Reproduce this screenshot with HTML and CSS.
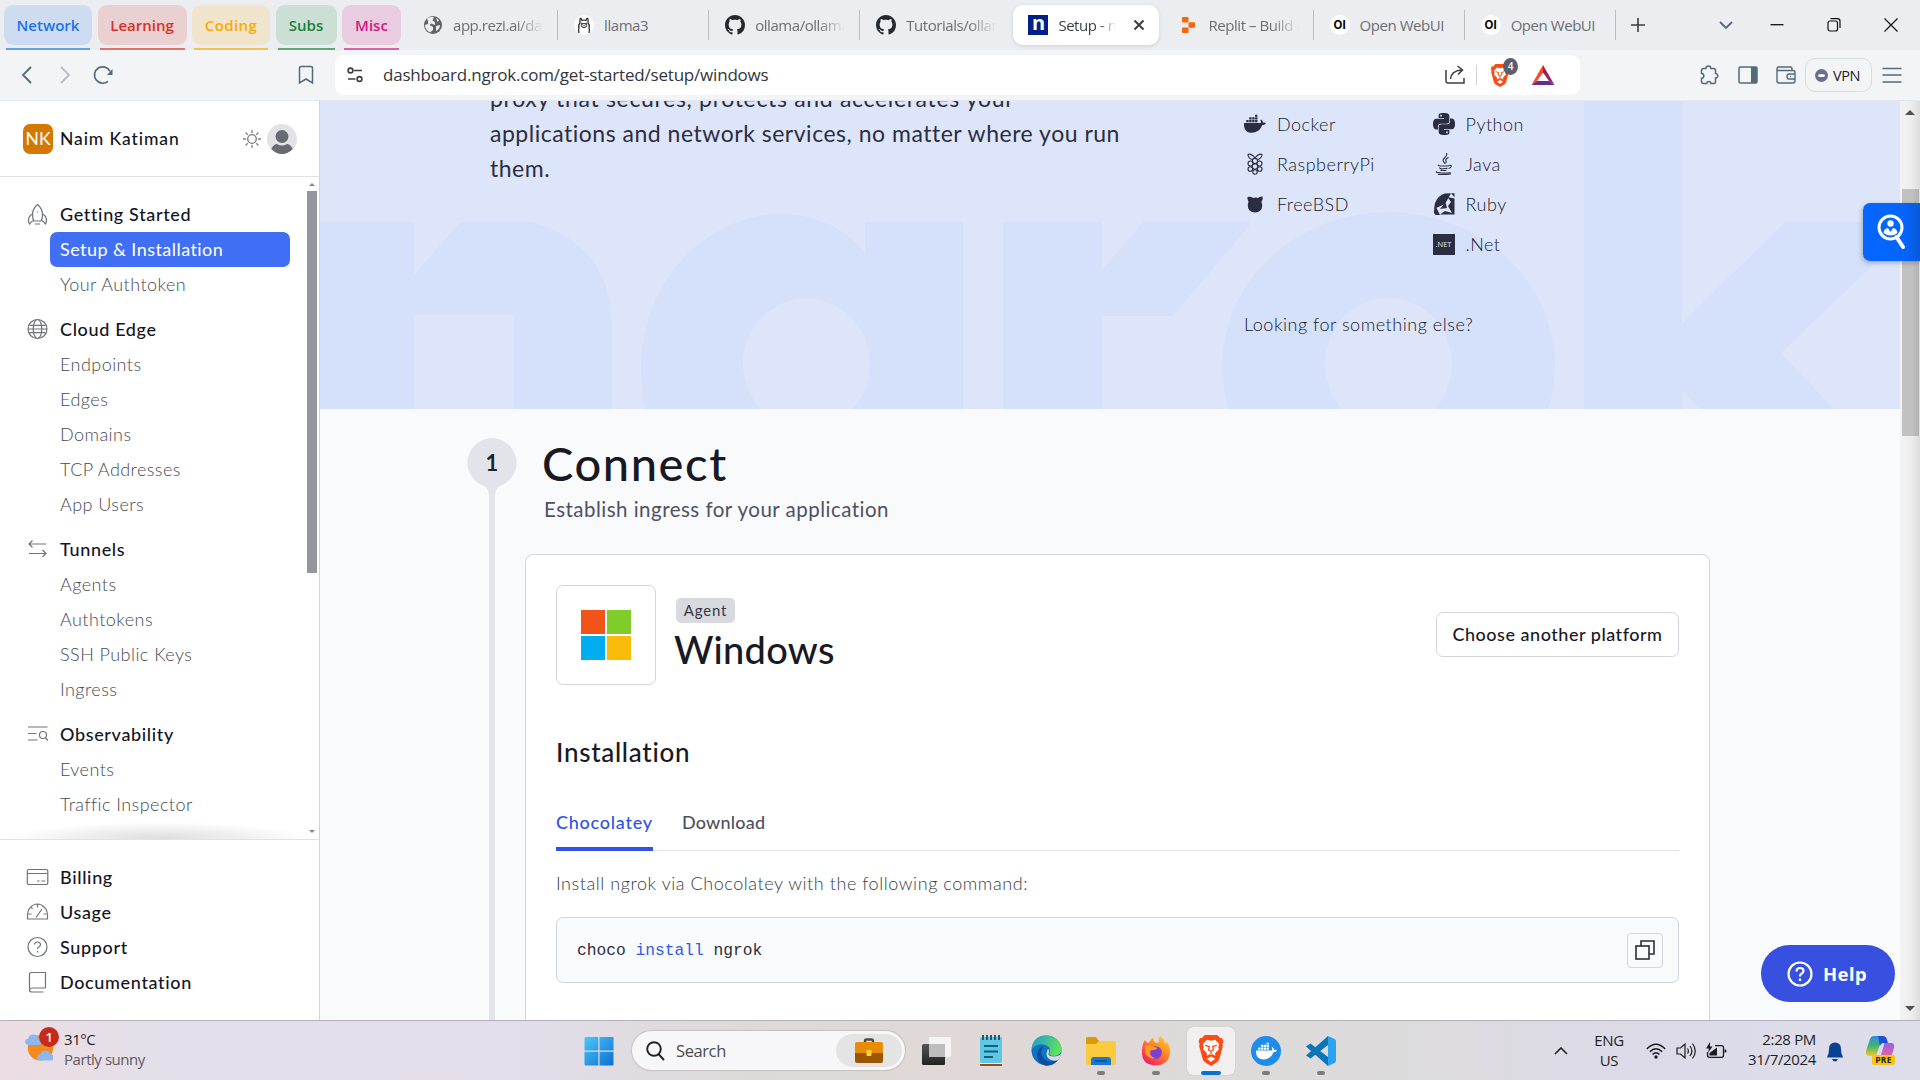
FILE: index.html
```html
<!DOCTYPE html>
<html lang="en">
<head>
<meta charset="utf-8">
<title>Setup - ngrok</title>
<link rel="stylesheet" href="styles.css">
</head>
<body>
<svg class="defs" width="0" height="0">
  <defs>
    <symbol id="github" viewBox="0 0 16 16"><path d="M8 0C3.58 0 0 3.58 0 8c0 3.54 2.29 6.53 5.47 7.59.4.07.55-.17.55-.38 0-.19-.01-.82-.01-1.49-2.01.37-2.53-.49-2.69-.94-.09-.23-.48-.94-.82-1.13-.28-.15-.68-.52-.01-.53.63-.01 1.08.58 1.23.82.72 1.21 1.87.87 2.33.66.07-.52.28-.87.51-1.07-1.78-.2-3.64-.89-3.64-3.95 0-.87.31-1.59.82-2.15-.08-.2-.36-1.02.08-2.12 0 0 .67-.21 2.2.82.64-.18 1.32-.27 2-.27.68 0 1.36.09 2 .27 1.53-1.04 2.2-.82 2.2-.82.44 1.1.16 1.92.08 2.12.51.56.82 1.27.82 2.15 0 3.07-1.87 3.75-3.65 3.95.29.25.54.73.54 1.48 0 1.07-.01 1.93-.01 2.2 0 .21.15.46.55.38A8.013 8.013 0 0016 8c0-4.42-3.58-8-8-8z"/></symbol>
    <symbol id="lion" viewBox="0 0 24 30"><path fill="#ff4a12" d="M6 0h12l3 3.2 1.7-.3L24 6.400l-1 2.600.5 1.600L20 23.500q-.6 2-2.500 3.200L12 30l-5.500-3.300Q4.600 25.500 4 23.500L.5 10.600 1 9 0 6.400l1.300-3.500 1.700.3z"/><path fill="#fff" d="M12 5.500l4-1 3.800 4.200-.8 3.300.7 1.600-3.900 4.200.5 2.400-3-1.500-1.300.6-1.300-.6-3 1.500.5-2.400-3.900-4.200.7-1.600-.8-3.300L8 4.500zM12 20.800l4 2.200-4 3.200-4-3.200z"/><path fill="none" stroke="#ff4a12" stroke-width="1.300" d="M6.300 10l4 1.200-.6 3.300 2.300 1.300 2.300-1.300-.6-3.300 4-1.200M12 15.800v3"/></symbol>
    <symbol id="whale" viewBox="0 0 24 20"><path d="M0 9h18.300c.4-.9.200-2.200-.5-3l.7-.8c1.500.9 2.200 2 2.100 3.300 1.200-.4 2.500-.2 3.400.4-.8 1.600-2.300 2.300-4.100 2.200C18 16.700 13.700 19.500 8.300 19.500 2.500 19.500-.4 15.500 0 9zM2.500 5.700h2.600v2.500H2.500zM5.700 5.700h2.600v2.500H5.700zM8.900 5.700h2.600v2.500H8.900zM12.100 5.700h2.600v2.500h-2.600zM5.700 2.600h2.600v2.500H5.700zM8.900 2.600h2.600v2.500H8.900zM12.100 2.600h2.600v2.500h-2.600zM12.100 0h2.600v2h-2.600z"/></symbol>
  </defs>
</svg>

<header class="tabstrip">
  <div class="groups">
    <div class="group g-network"><span>Network</span></div>
    <div class="group g-learning"><span>Learning</span></div>
    <div class="group g-coding"><span>Coding</span></div>
    <div class="group g-subs"><span>Subs</span></div>
    <div class="group g-misc"><span>Misc</span></div>
  </div>
  <div class="tabs">
    <div class="tab"><svg width="20" height="20" viewBox="0 0 20 20"><circle cx="10" cy="10" r="9" fill="#5f6368"/><path fill="#eceef1" d="M4 3.500Q8 1 11 2L9.500 5.500 12 7v3L8 8.500 6.500 10 10 12v3l-3 2.500Q2 15 2 10l3-1V6zM13 3l3 2-1.500 2zM13 11l4-1q0 4-4 6z"/></svg><span class="fade">app.rezi.ai/dashboard</span></div>
    <div class="tab"><svg width="20" height="20" viewBox="0 0 20 20"><circle cx="10" cy="10" r="10" fill="#fff"/><path fill="none" stroke="#222" stroke-width="1.200" d="M5 18q-1-3 0-5-1-3 1-5V4q1-2 2 1.500 2-1 4 0Q13 2 14 4v4q2 2 1 5 1 2 0 5"/><ellipse cx="10" cy="10.500" rx="2.700" ry="2" fill="none" stroke="#222"/><path stroke="#222" stroke-width="1.300" d="M7.200 8.500h1M11.800 8.500h1M10 10v1"/></svg><span>llama3</span></div>
    <div class="tab"><svg width="20" height="20" fill="#24292f"><use href="#github"/></svg><span class="fade">ollama/ollama: Get up</span></div>
    <div class="tab no-sep"><svg width="20" height="20" fill="#24292f"><use href="#github"/></svg><span class="fade">Tutorials/ollama at</span></div>
    <div class="tab active"><i class="n-icon">n</i><span class="fade">Setup - ngrok</span><svg class="close" width="12" height="12" viewBox="0 0 12 12"><path stroke="#3b3e43" stroke-width="2" d="M1.500 1.500l9 9M10.500 1.500l-9 9"/></svg></div>
    <div class="tab"><svg width="20" height="20" viewBox="0 0 20 20" fill="#f86606"><rect x="4" y="2" width="6.500" height="5.500" rx="1"/><rect x="10.500" y="7.200" width="6.500" height="5.600" rx="1"/><rect x="4" y="12.600" width="6.500" height="5.500" rx="1"/></svg><span class="fade">Replit – Build apps</span></div>
    <div class="tab"><i class="oi">OI</i><span>Open WebUI</span></div>
    <div class="tab"><i class="oi">OI</i><span>Open WebUI</span></div>
  </div>
  <svg class="newtab" width="16" height="16" viewBox="0 0 16 16"><path stroke="#3b3e43" stroke-width="1.600" d="M8 1v14M1 8h14"/></svg>
  <div class="winctl">
    <svg width="16" height="16" viewBox="0 0 16 16" fill="none" stroke="#546a78" stroke-width="1.800"><path d="M2 5l6 6 6-6"/></svg>
    <svg width="16" height="16" viewBox="0 0 16 16" fill="none" stroke="#111" stroke-width="1.300"><path d="M1.500 7.700h13"/></svg>
    <svg width="16" height="16" viewBox="0 0 16 16" fill="none" stroke="#111" stroke-width="1.200"><rect x="2" y="4" width="9.500" height="10" rx="2"/><path d="M4.500 1.700h7q2.500 0 2.500 2.500V11"/></svg>
    <svg width="16" height="16" viewBox="0 0 16 16" fill="none" stroke="#111" stroke-width="1.200"><path d="M1.500 1.500l13 13M14.500 1.500l-13 13"/></svg>
  </div>
</header>

<div class="toolbar">
  <div class="navbtns">
    <svg width="20" height="20" viewBox="0 0 20 20" fill="none" stroke="#546a78" stroke-width="1.800"><path d="M14 2L6 10l8 8"/></svg>
    <svg width="20" height="20" viewBox="0 0 20 20" fill="none" stroke="#b5bec5" stroke-width="1.800"><path d="M6 2l8 8-8 8"/></svg>
    <svg width="20" height="20" viewBox="0 0 20 20" fill="none" stroke="#546a78" stroke-width="1.700"><path d="M15 16.300A8.200 8.200 0 1 1 17 6.300"/><path fill="#546a78" stroke="none" d="M19.500 4v6h-5.500z"/></svg>
  </div>
  <svg class="bookmark" width="20" height="20" viewBox="0 0 20 20" fill="none" stroke="#546a78" stroke-width="1.500"><path d="M3.500 18V3q0-1.500 1.500-1.500h10q1.500 0 1.500 1.500v15L10 14z"/></svg>
  <div class="omnibox">
    <svg width="20" height="20" viewBox="0 0 20 20" fill="none" stroke="#3b3e43" stroke-width="1.600"><circle cx="5.500" cy="5.500" r="2.400"/><path d="M9 5.500h8M3 14h7.500"/><circle cx="14.500" cy="14" r="2.400"/></svg>
    <span class="url">dashboard.ngrok.com/get-started/setup/windows</span>
    <svg class="share" width="22" height="20" viewBox="0 0 22 20" fill="none" stroke="#3b3e43" stroke-width="1.500"><path d="M2 5v11q0 2 2 2h16v-5M6.500 14q.5-8 11-9M13.500 1l5 4-4.500 4.500"/></svg>
    <i class="vsep"></i>
    <span class="shield"><svg width="20" height="23"><use href="#lion"/></svg><b>4</b></span>
    <svg class="bat" width="24" height="20" viewBox="0 0 24 20"><path fill="#ff4724" d="M12 0v7.500L5.500 16.500.5 20z"/><path fill="#9e1f63" d="M12 0l11.500 20-5.500-4L12 7.500z"/><path fill="#662d91" d="M.5 20l5.500-4h12l5.500 4z"/></svg>
  </div>
  <div class="exts">
    <svg width="20" height="20" viewBox="0 0 20 20" fill="none" stroke="#546a78" stroke-width="1.500"><path d="M1.500 5.500q0-2 2-2h2.500a2.400 2.400 0 1 1 4.800 0h2.700q2 0 2 2v3a2.300 2.300 0 1 1 0 4.600V17q0 1.500-1.500 1.500h-3.200a2 2 0 0 0-4 0H3.500q-2 0-2-2v-3.300a2.300 2.300 0 0 0 0-4.600z"/></svg>
    <svg width="20" height="20" viewBox="0 0 20 20"><rect x="1" y="2" width="18" height="16" rx="1.500" fill="none" stroke="#546a78" stroke-width="1.500"/><path fill="#546a78" d="M13 2h6v16h-6z"/></svg>
    <svg width="20" height="20" viewBox="0 0 20 20" fill="none" stroke="#546a78" stroke-width="1.400"><path d="M16 5.500V3.500Q16 2 14.500 2H3Q1 2 1 4v12q0 2 2 2h14q2 0 2-2V7.500q0-2-2-2H1.500M19 9h-6q-2 0-2 2.500t2 2.500h6M14 11.500h1"/></svg>
    <div class="vpn"><i></i>VPN</div>
    <svg width="20" height="20" viewBox="0 0 20 20" stroke="#546a78" stroke-width="1.500"><path d="M.5 3.500h19M.5 10h19M.5 17h19"/></svg>
  </div>
</div>

<div class="page">
  <aside class="sidebar">
    <div class="account">
      <span class="badge">NK</span>
      <span class="name">Naim Katiman</span>
      <svg width="20" height="20" viewBox="0 0 20 20" fill="none" stroke="#787a84" stroke-width="1.300" stroke-linecap="round"><circle cx="10" cy="10" r="4.300"/><path d="M10 1.500v2M10 16.500v2M1.500 10h2M16.500 10h2M4 4l1.400 1.400M14.600 14.600L16 16M4 16l1.400-1.400M14.600 5.400L16 4"/></svg>
      <svg class="avatar" width="30" height="30" viewBox="0 0 30 30"><circle cx="15" cy="15" r="15" fill="#e3e3e6"/><circle cx="15" cy="12.500" r="6.500" fill="#686a73"/><path fill="#686a73" d="M4.200 25Q7 20 10 20q5 3 10 0 3 0 5.800 5-5 5-10.800 5t-10.800-5z"/></svg>
    </div>
    <div class="navwrap">
      <nav class="nav">
        <div class="section">
          <div class="head"><svg viewBox="0 0 22 22"><path d="M11 1.500q-5 4-5 10.500 0 4 1.500 6h7q1.500-2 1.500-6 0-6.500-5-10.500zM6 11q-4 2-4 6.500 0 2.500 1.200 3.500 1-2.500 3.800-3.500M16 11q4 2 4 6.500 0 2.500-1.200 3.500-1-2.500-3.800-3.500M8.500 21h5M11 8.500v1"/></svg>Getting Started</div>
          <a class="current">Setup &amp; Installation</a><a>Your Authtoken</a>
        </div>
        <div class="section">
          <div class="head"><svg viewBox="0 0 22 22"><circle cx="11" cy="11" r="9.500"/><ellipse cx="11" cy="11" rx="4.300" ry="9.500"/><path d="M3 7.300h16M3 14.700h16M1.500 11h19"/></svg>Cloud Edge</div>
          <a>Endpoints</a><a>Edges</a><a>Domains</a><a>TCP Addresses</a><a>App Users</a>
        </div>
        <div class="section">
          <div class="head"><svg viewBox="0 0 22 22"><path d="M19.500 6H3M6 2.500L2.500 6 6 9.500M2.500 15.500H19M16 12l3.500 3.500L16 19"/></svg>Tunnels</div>
          <a>Agents</a><a>Authtokens</a><a>SSH Public Keys</a><a>Ingress</a>
        </div>
        <div class="section">
          <div class="head"><svg viewBox="0 0 22 22"><path d="M1.500 4H21M1.500 10.500H10M1.500 17H11M19 15l2.500 2.500"/><circle cx="16.500" cy="12" r="3.500"/></svg>Observability</div>
          <a>Events</a><a>Traffic Inspector</a>
        </div>
      </nav>
      <div class="navscroll"><i class="up"></i><i class="thumb"></i><i class="down"></i></div>
    </div>
    <div class="footnav">
      <div class="head"><svg viewBox="0 0 22 22"><rect x=".8" y="3.500" width="20.500" height="15" rx="1.500"/><path d="M1 7.500h20M10.500 15h2.500M15 15h3.500"/></svg>Billing</div>
      <div class="head"><svg viewBox="0 0 22 22"><path d="M1 18q-.5-9 3-11.500Q7 3 11 3t7 3.500Q21.500 9 21 18zM11 3v3.500M2 13h3M17 13h3M9.500 16.500L15.500 8M5 6.500l1 1.500"/></svg>Usage</div>
      <div class="head"><svg viewBox="0 0 22 22"><circle cx="11" cy="11" r="9.500"/><path d="M8 8.500Q8.200 6 11 6t3 2.500Q14 10 12.500 10.700 11 11.300 11 13M11 15v1.500"/></svg>Support</div>
      <div class="head"><svg viewBox="0 0 22 22"><path d="M19 17V1.500H5Q3 1.500 3 3.500V19M19 17H5.500Q3 17 3 19t2.500 2H17"/></svg>Documentation</div>
    </div>
  </aside>

  <main class="main">
    <section class="hero">
      <svg class="wordmark" width="1580" height="308" viewBox="0 0 1580 308" fill="#d5e0fb"><path d="M0 121.500H94V174L140 121H212C266 136 292 174 292 224V308H194V214H94V308H0z"/><path fill-rule="evenodd" d="M325 308Q321 290 321 268C321 180 386 113 461 113Q512 113 545 151V121H643V308H532Q550 290 550 263A63.500 65.500 0 1 0 423 263Q424 290 441 308z"/><path d="M683 121H782V169L823 121H930V124L853 215H782V308H683z"/><path fill-rule="evenodd" d="M1068.500 111A166.500 154 0 0 0 1068.500 419 166.500 154 0 0 0 1068.500 111zM1068.500 197A63.500 66 0 0 1 1068.500 329 63.500 66 0 0 1 1068.500 197z"/><path d="M1264 0H1362V222L1465 121H1580V138L1461 252 1514 308H1379L1362 289V308H1264z"/></svg>
      <p class="lead"><span>proxy that secures, protects and accelerates your</span><br>applications and network services, no matter where you run<br>them.</p>
      <div class="links">
        <ul>
          <li><svg viewBox="0 0 22 22"><use href="#whale" x="0" y="1" width="22" height="20"/></svg>Docker</li>
          <li><svg viewBox="0 0 22 22" fill="none" stroke="#2b2d42" stroke-width="1.100"><path d="M11 5Q7 0 4 1.500 4 5 8 6.500M11 5q4-5 7-3.500 0 3.500-4 5"/><circle cx="11" cy="8" r="2.600"/><circle cx="6.500" cy="10.500" r="2.500"/><circle cx="15.500" cy="10.500" r="2.500"/><circle cx="11" cy="13.500" r="2.700"/><circle cx="6.300" cy="16" r="2.300"/><circle cx="15.700" cy="16" r="2.300"/><circle cx="11" cy="19" r="2.200"/></svg>RaspberryPi</li>
          <li><svg viewBox="0 0 22 22"><path d="M3.500 4Q7 3 9 5q3-1 5 0 2-2 4.500-1.500Q19.500 6 17.500 9q1.500 3 .2 6.500-2 4-6.700 4t-6.700-4Q3 12 4.500 9 3 6 3.500 4z"/></svg>FreeBSD</li>
        </ul>
        <ul>
          <li><svg viewBox="0 0 24 24"><path d="M14.250.18l.9.2.73.26.59.3.45.32.34.34.25.34.16.33.1.3.04.26.02.2-.01.13V8.500l-.05.63-.13.55-.21.46-.26.38-.3.31-.33.25-.35.19-.35.14-.33.1-.3.07-.26.04-.21.02H8.770l-.69.05-.59.14-.5.22-.41.27-.33.32-.27.35-.2.36-.15.37-.1.35-.07.32-.04.27-.02.21v3.060H3.170l-.21-.03-.28-.07-.32-.12-.35-.18-.36-.26-.36-.36-.35-.46-.32-.59-.28-.73-.21-.88-.14-1.050-.05-1.230.06-1.220.16-1.040.24-.87.32-.71.36-.57.4-.44.42-.33.42-.24.4-.16.36-.1.32-.05.24-.01h.16l.06.01h8.160v-.83H6.180l-.01-2.750-.02-.37.05-.34.11-.31.17-.28.25-.26.31-.23.38-.2.44-.18.51-.15.58-.12.64-.1.71-.06.77-.04.84-.02 1.270.05zm-6.300 1.980l-.23.33-.08.41.08.41.23.34.33.22.41.09.41-.09.33-.22.23-.34.08-.41-.08-.41-.23-.33-.33-.22-.41-.09-.41.09zm13.090 3.950l.28.06.32.12.35.18.36.27.36.35.35.47.32.59.28.73.21.88.14 1.040.05 1.230-.06 1.230-.16 1.040-.24.86-.32.71-.36.57-.4.45-.42.33-.42.24-.4.16-.36.09-.32.05-.24.02-.16-.01h-8.220v.82h5.840l.01 2.760.02.36-.05.34-.11.31-.17.29-.25.25-.31.24-.38.2-.44.17-.51.15-.58.13-.64.09-.71.07-.77.04-.84.01-1.270-.04-1.070-.14-.9-.2-.73-.25-.59-.3-.45-.33-.34-.34-.25-.34-.16-.33-.1-.3-.04-.25-.02-.2.01-.13v-5.340l.05-.64.13-.54.21-.46.26-.38.3-.32.33-.24.35-.2.35-.14.33-.1.3-.06.26-.04.21-.02.13-.01h5.840l.69-.05.59-.14.5-.21.41-.28.33-.32.27-.35.2-.36.15-.36.1-.35.07-.32.04-.28.02-.21V6.070h2.090l.14.01zm-6.470 14.250l-.23.33-.08.41.08.41.23.33.33.23.41.08.41-.08.33-.23.23-.33.08-.41-.08-.41-.23-.33-.33-.23-.41-.08-.41.08z"/></svg>Python</li>
          <li><svg viewBox="0 0 22 22" fill="none" stroke="#2b2d42" stroke-width="1.100"><path d="M13.500 0q1 2.500-2 5t.5 5.500M15.500 4.500q-3.500 1.500-2.500 3.500.5 1-.5 2.500M5.500 12q-1.500 1 5 1t6-1M16.500 12.500q2.500-.5 1.500 1.500-.7 1-2.500 1.500M6.500 14.500q0 1.500 4 1.200 3 0 4-.7M7.500 17q1 1 6 .2M4 18.500q-2.500 1 4.500 1.500 7 .3 9-.5M5 21.500q8 .5 13-.8"/></svg>Java</li>
          <li><svg viewBox="0 0 22 22"><path d="M2 10Q5 2 12 .5L18 .3 12 11 1 16zM14.500 4L21.500 5.500V21.500H7L12 18l7 2-4-7 3-4zM18 .3h3.500v4zM1 17l2-3 4 8Q0 23 1 17zM12.500 9.500L14 15l-7 1z"/></svg>Ruby</li>
          <li><i class="net">.NET</i>.Net</li>
        </ul>
        <p>Looking for something else?</p>
      </div>
    </section>
    <section class="step">
      <div class="rail"><svg width="50" height="60" viewBox="0 0 50 60" fill="#e3e4ea"><circle cx="25" cy="24.700" r="24.600"/><path d="M15 46q7 3 7.200 14h5.600q.2-11 7.200-14z"/></svg><b>1</b><i></i></div>
      <div class="body">
        <h1>Connect</h1>
        <p class="sub">Establish ingress for your application</p>
        <div class="card">
          <div class="platform">
            <div class="logo"><i></i><i></i><i></i><i></i></div>
            <div class="title"><span class="tag">Agent</span><h2>Windows</h2></div>
            <button>Choose another platform</button>
          </div>
          <h3>Installation</h3>
          <div class="cardtabs"><span class="on">Chocolatey</span><span>Download</span></div>
          <p class="hint">Install ngrok via Chocolatey with the following command:</p>
          <div class="code"><code>choco <em>install</em> ngrok</code><span class="copy"><svg width="20" height="20" viewBox="0 0 20 20" fill="none" stroke="#2b2d3a" stroke-width="1.600"><rect x="1" y="6" width="13" height="13"/><path d="M6 6V1h13v13h-5"/></svg></span></div>
        </div>
      </div>
    </section>
    <div class="help"><svg width="26" height="26" viewBox="0 0 26 26" fill="none" stroke="#fff" stroke-width="2.200"><circle cx="13" cy="13" r="11.500"/><path d="M9.500 10.500q0-3.500 3.500-3.500t3.500 3q0 1.500-2 2.700-1.500 1-1.500 2.800M13 17.500V20"/></svg>Help</div>
  </main>
  <div class="pagescroll"><i class="up"></i><i class="thumb"></i><i class="down"></i></div>
  <div class="lookup"><svg width="30" height="36" viewBox="0 0 30 36" fill="none" stroke="#fff"><circle cx="13.500" cy="13.500" r="11.500" stroke-width="3"/><path stroke-width="4" stroke-linecap="round" d="M19.500 23L26 33"/><circle cx="13.500" cy="9.500" r="3.200" fill="#fff" stroke="none"/><path fill="#fff" stroke="none" d="M6.500 19q.5-4.500 4.500-5l2.500 4 2.500-4q4 .5 4.500 5-6.500 5-14 0z"/></svg></div>
</div>

<footer class="taskbar">
  <div class="weather">
    <div class="wicon"><svg width="34" height="36" viewBox="0 0 34 36"><circle cx="17" cy="20" r="14" fill="#f28a1e"/><path fill="#8db8ef" d="M3 17q-3-1-3-3.500 0-3 3.500-3.500Q4.500 5.500 9 5.500t6 4.500q3 .5 3 3.500T15 17zM16 34q-3-.5-3-3.500t4-3.500q1-4 5-4t5.500 3.500Q31 27 31 30.500T28 34z"/></svg><b>1</b></div>
    <div><p>31°C</p><p class="dim">Partly sunny</p></div>
  </div>
  <div class="apps">
    <svg width="30" height="30" viewBox="0 0 30 30"><defs><linearGradient id="win" x1="0" y1="0" x2="1" y2="1"><stop offset="0" stop-color="#4cc8fb"/><stop offset="1" stop-color="#0a6fd2"/></linearGradient></defs><path fill="url(#win)" d="M.5 2q0-1 1-1H14.300v13.500H.5zM15.500 1h13q1 0 1 1v12.500h-14zM.5 15.700h13.800v13.800H1.500q-1 0-1-1zM15.500 15.700h14v12.800q0 1-1 1h-13z"/></svg>
    <div class="search"><svg width="20" height="20" viewBox="0 0 20 20" fill="none" stroke="#222" stroke-width="1.900"><circle cx="9" cy="8" r="6.800"/><path d="M13.500 13l5 5.500" stroke-linecap="round"/></svg><span>Search</span><div class="case"><svg width="30" height="26" viewBox="0 0 30 26"><path fill="none" stroke="#4a4a4a" stroke-width="2.400" d="M11 5V3q0-1.500 1.500-1.500h5Q19 1.500 19 3v2"/><path fill="#e98c05" d="M1 6q0-2 2-2h24q2 0 2 2v11H1z"/><path fill="#9c5600" d="M1 15h28v8q0 2-2 2H3q-2 0-2-2z"/><rect x="12.500" y="12" width="5" height="6" rx="1" fill="#ffd13b"/></svg></div></div>
    <span class="app"><svg width="30" height="30" viewBox="0 0 30 30"><defs><linearGradient id="tv" x2="0" y2="1"><stop stop-color="#555"/><stop offset="1" stop-color="#222"/></linearGradient></defs><rect x="1" y="8" width="23" height="21" rx="1.500" fill="url(#tv)"/><rect x="8" y="1" width="22" height="20" rx="1.500" fill="#f6f6f6" fill-opacity=".95"/><path fill="#bdbdbd" d="M8 8h16v13H9.500Q8 21 8 19.500z"/></svg></span>
    <span class="app"><svg width="24" height="32" viewBox="0 0 24 32"><path fill="#9c4a12" d="M1 27h22v4H2q-1 0-1-1z"/><path fill="#f4f4f4" d="M1 26h22v3H1z"/><rect x="1" y="2" width="22" height="26" rx="1.500" fill="#5cc8e6"/><path stroke="#13607c" stroke-width="2" d="M5 11h14M5 16.500h14M5 22h9M4 0v5M8 0v5M12 0v5M16 0v5M20 0v5"/></svg></span>
    <span class="app"><svg width="31" height="31" viewBox="0 0 31 31"><defs><linearGradient id="ed" x1="0" y1="0" x2="1" y2=".3"><stop stop-color="#1a9ad8"/><stop offset="1" stop-color="#5ee060"/></linearGradient></defs><circle cx="15.500" cy="15.500" r="15" fill="#1073c4"/><path fill="url(#ed)" d="M.7 14Q2 0 16 .5q13 1 14.500 13 0 7-7 7.500-6 0-5-3.500 2-5-3-7Q7 7 .7 14z"/><path fill="#0c4d9c" d="M13 11q-6 6 0 13 5 5 14 1-5 6.500-13 5.500Q6 28 6 20q1-8 7-9z"/><path fill="#dedad9" d="M17 14q2 1.500.5 4.500-.5 3 5.500 3 4 0 7-2.500-1 4-3 6-6 2-10-2-3-4 0-9z"/></svg></span>
    <span class="app run"><svg width="32" height="30" viewBox="0 0 32 30"><path fill="#d99a0b" d="M1 2.500Q1 1 2.500 1H11l3 4v5H1z"/><path fill="#fcca3e" d="M1 8h10l3-3h15q2 0 2 2v20q0 2-2 2H3q-2 0-2-2z"/><path fill="#1678d0" d="M6 29v-5q0-3 3-3h14q3 0 3 3v5z"/><path stroke="#0b4d8e" stroke-width="1.600" d="M10 25h12"/></svg></span>
    <span class="app run"><svg width="30" height="30" viewBox="0 0 30 30"><defs><linearGradient id="ff" x1="1" y1="0" x2=".2" y2="1"><stop stop-color="#ffdf3c"/><stop offset=".45" stop-color="#ff8a1f"/><stop offset="1" stop-color="#f0156e"/></linearGradient></defs><path fill="url(#ff)" d="M4 4q1 2 2.500 3l2-1Q10 3 12 2q0 3 3 5l3-1Q17 3 19 0q5 4 5 8l2-2q4 5 3 12-2 11-14 11.500Q2 29 1 18 .5 9 4 4z"/><circle cx="14.500" cy="16.500" r="6.300" fill="#7a3fd8"/><path fill="#ff9a20" d="M4 10q6-2 9 1l4 1q-4 3-7 2-3 6 4 8-6 2-10-5z"/></svg></span>
    <span class="app focus"><svg width="28" height="31"><use href="#lion"/></svg></span>
    <span class="app run"><svg width="30" height="30" viewBox="0 0 30 30"><circle cx="15" cy="15" r="15" fill="#1f8ceb"/><use href="#whale" x="5" y="6.500" width="21" height="17.500" fill="#fff"/></svg></span>
    <span class="app run"><svg width="30" height="30" viewBox="0 0 30 30"><path fill="#0b75b8" d="M22 0v9L4.500 22.500 0 19.500zM4.500 7.500L22 21v9L0 10.500z"/><path fill="#2aa4f0" d="M22 0l6.500 3q1.500.8 1.500 2v20q0 1.200-1.500 2L22 30z"/></svg></span>
  </div>
  <div class="tray">
    <svg class="caret" width="14" height="8" viewBox="0 0 14 8" fill="none" stroke="#222" stroke-width="1.600"><path d="M1 7l6-6 6 6"/></svg>
    <div class="lang"><p>ENG</p><p>US</p></div>
    <svg width="20" height="16" viewBox="0 0 20 16" fill="none" stroke="#1c1c1c" stroke-width="1.400"><path d="M.8 6Q10-3.500 19.200 6M3.800 8.800q6.200-6.200 12.400 0M6.500 11.500Q10 8 13.500 11.500"/><circle cx="10" cy="14" r="1.700" fill="#1c1c1c" stroke="none"/></svg>
    <svg width="20" height="18" viewBox="0 0 20 18" fill="none" stroke="#1c1c1c" stroke-width="1.200"><path d="M1 6h3.500L9 2v14L4.500 12H1zM11.500 6.500q1.800 2.500 0 5M14 4q3.800 5 0 10M16.500 1.500q5.500 7.500 0 15"/></svg>
    <svg width="21" height="18" viewBox="0 0 21 18"><path fill="none" stroke="#1c1c1c" stroke-width="1.300" d="M9 3.700h6.500q2 0 2 2v7.600q0 2-2 2H3.500q-2 0-2-2V10"/><path fill="#1c1c1c" d="M18.500 7.500h1q1 0 1 1.500t-1 1.500h-1zM3.500 13.500V11L11 5.500v8zM4 0L0 6.500h3L2 11l4.500-6.500H4z"/></svg>
    <div class="clock"><p>2:28 PM</p><p>31/7/2024</p></div>
    <svg class="bell" width="18" height="20" viewBox="0 0 18 20" fill="#0b4192"><path d="M9 .5q6 0 6 6.500 0 4.500 1.500 7l.5 1.500H1L1.500 14Q3 11.500 3 7 3 .5 9 .5zM6 17h6q-1 2.500-3 2.500T6 17z"/></svg>
    <div class="copilot"><svg width="30" height="28" viewBox="0 0 30 28"><defs><linearGradient id="c1" x1="0" y1="0" x2="0" y2="1"><stop stop-color="#2b8fe0"/><stop offset=".5" stop-color="#3fb56c"/><stop offset="1" stop-color="#f7c822"/></linearGradient><linearGradient id="c2" x2="0" y2="1"><stop stop-color="#9a5bf0"/><stop offset="1" stop-color="#f06a80"/></linearGradient></defs><path fill="url(#c1)" d="M8 0h9L11 17q-1 3-4 3H4q-5 0-4-5L4 3q1-3 4-3z"/><path fill="#1a4fe0" d="M12 0h5q3 0 4 4l1 3h-5q-2 0-3 3z"/><path fill="url(#c2)" d="M18 7h7q4 0 3 5l-3 10h-11l4-13z"/></svg><b>PRE</b></div>
  </div>
</footer>
</body>
</html>
```
FILE: styles.css
```css
* { box-sizing: border-box; margin: 0; padding: 0; }
body { width: 1920px; height: 1080px; overflow: hidden; display: flex; flex-direction: column; background: #f9fafc; font-family: "Open Sans", "Noto Sans", sans-serif; }
svg { display: block; flex: none; }
i, em { font-style: normal; }
ul { list-style: none; }
.defs { position: absolute; }

/* Tab strip */
.tabstrip { height: 50px; flex: none; background: #ecedf1; display: flex; align-items: center; }
.groups { display: flex; width: 407px; padding-left: 4px; gap: 5.500px; height: 50px; padding-top: 5px; }
.group { display: flex; flex-direction: column; gap: 3px; font-size: 15px; font-weight: 600; }
.group span { height: 40px; border-radius: 9px; line-height: 40px; text-align: center; }
.group::after { content: ""; height: 2px; margin: 0 2px; background: currentColor; opacity: .65; }
.g-network { width: 88px; color: #1a73e8; } .g-network span { background: #cddcf0; }
.g-learning { width: 89px; color: #d93025; } .g-learning span { background: #ead0d1; }
.g-coding { width: 78px; color: #f9ab00; letter-spacing: .4px; } .g-coding span { background: #f0e4cd; }
.g-subs { width: 61px; color: #188038; } .g-subs span { background: #cbdfd4; }
.g-misc { width: 59px; color: #d01884; } .g-misc span { background: #e9cce0; }
.tabs { display: grid; grid-template-columns: repeat(8, 151.100px); }
.tab { display: flex; align-items: center; gap: 10px; height: 40px; padding: 0 12px 0 16px; font-size: 15px; letter-spacing: -.45px; color: #6b6e73; position: relative; white-space: nowrap; }
.tab:not(.no-sep):not(.active)::after { content: ""; position: absolute; right: 0; top: 5px; width: 1px; height: 30px; background: #b9bcc1; }
.fade { flex: 1; overflow: hidden; -webkit-mask-image: linear-gradient(90deg, #000 68%, transparent 97%); mask-image: linear-gradient(90deg, #000 68%, transparent 97%); }
.tab.active { background: #fff; border-radius: 10px; margin: 0 3px 0 2px; padding: 0 14px 0 15px; color: #3b3e43; box-shadow: 0 1px 4px rgba(0,0,0,.12); }
.active .fade { flex: 0 0 60px; }
.active .close { margin-left: auto; }
.n-icon { width: 20px; height: 20px; background: #00208c; color: #fff; font: 700 20px/16px "Open Sans", sans-serif; text-align: center; flex: none; }
.oi { width: 20px; height: 20px; border-radius: 50%; background: #fff; color: #000; font: 700 11.500px/20px Inter, sans-serif; text-align: center; letter-spacing: 0; flex: none; }
.newtab { margin-left: 14px; }
.winctl { margin-left: auto; display: flex; padding-right: 21px; gap: 41px; }
.winctl svg:first-child { margin-right: -6px; }

/* Toolbar */
.toolbar { height: 51px; flex: none; background: #f3f4f6; border-bottom: 1px solid #e6e7ea; display: flex; align-items: center; }
.navbtns { display: flex; gap: 18px; padding-left: 17px; width: 296px; }
.bookmark { margin-right: 19px; }
.omnibox { width: 1245px; height: 40px; background: #fff; border-radius: 9px; display: flex; align-items: center; padding-left: 10px; }
.url { margin: -2px 0 0 18px; font-size: 17px; letter-spacing: -.2px; color: #33363b; flex: 1; }
.vsep { width: 1px; height: 20px; background: #cfd1d5; margin: 0 13px 0 10px; }
.shield { position: relative; width: 22px; height: 23px; }
.shield b { position: absolute; left: 13px; top: -6px; width: 15px; height: 17px; border-radius: 50%; background: #5b5e6d; color: #fff; font-size: 10px; line-height: 17px; text-align: center; font-weight: 600; }
.bat { margin: 0 25px 0 19px; }
.exts { display: flex; align-items: center; gap: 18px; padding-left: 120px; }
.vpn { width: 67px; height: 34px; border: 1px solid #d4dde1; border-radius: 10px; display: flex; align-items: center; gap: 5px; padding-left: 9px; font-size: 14.500px; color: #222; margin: 0 -8px 0 -9px; letter-spacing: -.4px; }
.vpn i { width: 13px; height: 13px; border-radius: 50%; border-style: solid; border-width: 5.500px 3px; border-color: #6b6f8f; background: #fff; }

/* Page */
.page { flex: 1; display: flex; position: relative; min-height: 0; overflow: hidden; font-family: Lato, "Open Sans", sans-serif; font-variant-ligatures: none; }
.sidebar { width: 320px; flex: none; background: #fff; border-right: 1px solid #d3d4da; display: flex; flex-direction: column; }
.account { height: 76px; flex: none; border-bottom: 1px solid #e1e2e8; display: flex; align-items: center; padding-left: 23px; }
.badge { width: 30px; height: 30px; border-radius: 7px; background: #d47800; color: #fff; font-size: 17.500px; line-height: 30px; text-align: center; margin-right: 7px; }
.name { width: 182px; font-size: 17.500px; font-weight: 500; letter-spacing: .9px; color: #14151f; }
.avatar { margin-left: 5px; }
.navwrap { flex: none; height: 663px; display: flex; justify-content: space-between; overflow: hidden; border-bottom: 1px solid #e1e2e8; background: radial-gradient(ellipse 150px 17px at 50% 100%, #dcdcdc, rgba(255,255,255,0)) #fff; }
.nav { padding: 20px 0 0 22px; }
.section { margin-bottom: 10px; }
.head { height: 35px; display: flex; align-items: center; gap: 7px; padding-bottom: 1px; font-size: 18px; font-weight: 500; letter-spacing: .65px; color: #14151f; }
.head svg { width: 31px; height: 22px; fill: none; stroke: #70737c; stroke-width: 1.200; }
.nav a { display: block; width: 240px; height: 35px; line-height: 35px; margin-left: 28px; padding-left: 10px; font-size: 18px; font-weight: 300; letter-spacing: .45px; color: #484a52; border-radius: 7px; }
.nav a.current { background: #406ff5; color: #fff; font-weight: 400; }
.nav .head svg, .footnav .head svg { margin-left: 0; margin-right: 0; }
.nav .head, .footnav .head { margin-left: 0; }
.navscroll { width: 12px; display: flex; flex-direction: column; padding-top: 6px; }
.navscroll i { flex: none; }
.navscroll .thumb { width: 10px; height: 382px; background: #95959e; }
.up, .down { width: 0; height: 0; border: 3px solid transparent; }
.navscroll .up { border-bottom: 3px solid #84848c; margin: -3px 0 5px 2px; }
.navscroll .down { border-top: 3px solid #84848c; margin: auto 0 3px 2px; }
.footnav { padding: 20px 0 0 22px; }
.head svg { flex: none; }
.nav .head, .footnav .head { position: static; width: 260px; transform: none; }

.main { width: 1580px; flex: none; position: relative; }
.hero { height: 308px; background: #dde5fb; position: relative; display: flex; padding-left: 170px; overflow: hidden; }
.wordmark { position: absolute; left: 0; top: 0; }
.lead { position: relative; width: 754px; margin-top: -20px; font-size: 23px; line-height: 35px; letter-spacing: .51px; color: #2c2e40; white-space: nowrap; }
.lead span { letter-spacing: .68px; }
.links { position: relative; display: grid; grid-template-columns: 188.500px 160px; grid-template-rows: 160px 40px; row-gap: 40px; padding-top: 3px; color: #17192c; font-size: 18px; letter-spacing: .5px; font-weight: 300; }
.links li { display: flex; align-items: center; gap: 11px; height: 40px; }
.links li svg { width: 22px; height: 22px; fill: #2b2d42; }
.links li svg[fill="none"] { fill: none; }
.links p { line-height: 40px; grid-column: 1 / 3; letter-spacing: .53px; }
.net { width: 22px; height: 21px; background: #2b2d42; color: #e8ecfa; font: 400 7.500px/21px "Open Sans", sans-serif; text-align: center; letter-spacing: 0; }

.step { display: flex; height: 611px; overflow: hidden; padding: 23px 0 0 147px; }
.rail { width: 50px; margin: 6px 8px 0 0; display: grid; grid-template-rows: 60px 1fr; justify-items: center; }
.rail svg, .rail b { grid-area: 1 / 1; }
.rail b { font-size: 22px; line-height: 49px; font-weight: 700; color: #20222e; }
.rail i { width: 5.500px; background: #e3e4ea; }
.body { width: 1185px; display: flex; flex-direction: column; }
h1 { font-size: 47px; line-height: 62px; letter-spacing: 1.600px; font-weight: 500; color: #181924; padding-left: 17px; }
.sub { font-size: 20.500px; line-height: 30px; margin: 0 0 30px; letter-spacing: .48px; color: #4f5161; padding-left: 19px; }
.card { flex: none; height: 600px; background: #fff; border: 1px solid #d3d5dd; border-radius: 8px; padding: 30px; color: #181924; }
.platform { display: flex; align-items: center; height: 100px; }
.logo { width: 100px; height: 100px; border: 1px solid #d3d5dd; border-radius: 7px; display: grid; grid-template-columns: 24px 24px; grid-template-rows: 24px 24px; gap: 2px; align-content: center; justify-content: center; }
.logo i:nth-child(1) { background: #f25319; } .logo i:nth-child(2) { background: #80cc28; } .logo i:nth-child(3) { background: #00adef; } .logo i:nth-child(4) { background: #fbbc09; }
.title { flex: 1; padding-left: 18px; height: 100px; padding-top: 13px; }
.tag { display: block; width: 59px; height: 25px; margin-left: 2px; background: #d9dadf; border-radius: 5px; font-size: 15px; line-height: 24px; letter-spacing: .8px; text-align: center; color: #363846; }
h2 { font-size: 38px; line-height: 45px; margin-top: 4px; font-weight: 500; letter-spacing: .25px; }
button { width: 243px; height: 45px; margin-top: -2px; background: #fff; border: 1px solid #d3d5dd; border-radius: 7px; font: 500 18px Lato, sans-serif; letter-spacing: .52px; color: #181924; }
h3 { font-size: 26px; line-height: 35px; font-weight: 500; letter-spacing: .7px; margin-top: 50px; }
.cardtabs { display: flex; gap: 29px; margin-top: 35px; height: 46px; border-bottom: 1px solid #e1e2ea; font-size: 18px; line-height: 35px; font-weight: 500; letter-spacing: .2px; color: #4f5161; }
.cardtabs .on { width: 97px; color: #2f53e6; border-bottom: 4px solid #2f53e6; height: 46px; letter-spacing: .75px; }
.hint { margin: 18px 0 20px; font-size: 18px; line-height: 28px; font-weight: 300; letter-spacing: .56px; color: #393b44; }
.code { height: 66px; background: #f9fafc; border: 1px solid #d3d5dd; border-radius: 7px; display: flex; align-items: center; justify-content: space-between; padding: 0 15px 0 20px; }
code { font-family: "Liberation Mono", monospace; font-size: 16.250px; color: #2b2d3a; }
code em { color: #2f5be6; }
.copy { width: 36px; height: 35px; border: 1px solid #d3d5dd; border-radius: 4px; display: grid; place-items: center; }
.help { position: absolute; left: 1441px; top: 844px; width: 134px; height: 57px; border-radius: 29px; background: #3850e0; color: #fff; display: flex; align-items: center; gap: 10px; padding-left: 26px; font: 700 18.500px "Noto Sans", sans-serif; letter-spacing: .4px; }

.pagescroll { width: 20px; background: linear-gradient(90deg, #f3f3f3, #ececec 60%, #dcdcdc); display: flex; flex-direction: column; align-items: center; }
.pagescroll i { flex: none; }
.pagescroll .up { border: 5px solid transparent; border-bottom: 5px solid #505050; margin-top: 4px; }
.pagescroll .thumb { width: 17px; height: 247px; background: linear-gradient(90deg, #c1c1c1 60%, #b2b2b2); margin-top: 74px; }
.pagescroll .down { border: 5px solid transparent; border-top: 5px solid #505050; margin: auto 0 4px; }
.lookup { position: absolute; left: 1863px; top: 102px; width: 57px; height: 58px; border-radius: 7px 0 0 7px; background: linear-gradient(90deg, #0565ff 70%, #0a5ad8); display: grid; place-items: center; box-shadow: -1px 2px 5px rgba(0,0,0,.25); }

/* Taskbar */
.taskbar { height: 60px; flex: none; border-top: 1px solid #b3b0b8; background: linear-gradient(90deg, #ecdde3, #e4dfe9 150px, #e3deeb 500px, #dcdad8 760px, #e0d8d7 1000px, #dcdbdc 1400px, #dcdae8 1650px, #dedeeb); display: flex; font-size: 15px; line-height: 20px; color: #1f1f22; }
.weather { display: flex; gap: 4px; width: 583px; padding: 8px 0 0 25px; letter-spacing: -.45px; }
.wicon { position: relative; width: 35px; padding-top: 1px; margin-top: -1px; }
.wicon svg { width: 31px; height: 34px; }
.wicon b { position: absolute; left: 14px; top: -1px; width: 20px; height: 20px; border-radius: 50%; background: #c42b1c; color: #fff; font-size: 13px; font-weight: 600; text-align: center; }
.dim { color: #5c5a61; }
.apps { display: flex; align-items: center; padding-left: 1px; width: 965px; }
.search { width: 273px; height: 39px; border-radius: 20px; background: #f7f6f8; box-shadow: 0 0 1px 1px rgba(0,0,0,.12); margin: 0 4px 0 18px; display: flex; align-items: center; padding: 0 3px 0 13px; }
.search span { flex: 1; padding-left: 11px; font-size: 16.500px; letter-spacing: -.4px; color: #4c4c50; }
.case { width: 66px; height: 33px; border-radius: 17px; background: #e5e4e4; display: grid; place-items: center; }
.app { width: 48px; height: 48px; margin-right: 7px; display: grid; place-items: center; position: relative; border-radius: 6px; flex: none; }
.run::after, .focus::after { content: ""; position: absolute; bottom: 0; left: 20px; width: 8px; height: 4px; border-radius: 2px; background: #7c7a7b; }
.focus { background: #f1eff0; box-shadow: 0 0 1px rgba(0,0,0,.3); }
.focus::after { left: 14px; width: 20px; background: #0872d0; }
.app:first-of-type { margin-left: 3px; }
.tray { display: flex; align-items: center; padding-left: 6px; gap: 10px; letter-spacing: -.34px; }
.lang { width: 40px; text-align: center; margin: -2px 7px 0 11px; }
.clock { width: 79px; text-align: right; margin-top: -3px; }
.bell { margin-top: 2px; }
.copilot { position: relative; margin: -2px 0 0 12px; }
.copilot b { position: absolute; left: 6px; top: 19px; width: 23px; height: 10px; border-radius: 2px; background: #f8c415; color: #222; font-size: 8.500px; line-height: 10px; text-align: center; letter-spacing: .3px; }
```
